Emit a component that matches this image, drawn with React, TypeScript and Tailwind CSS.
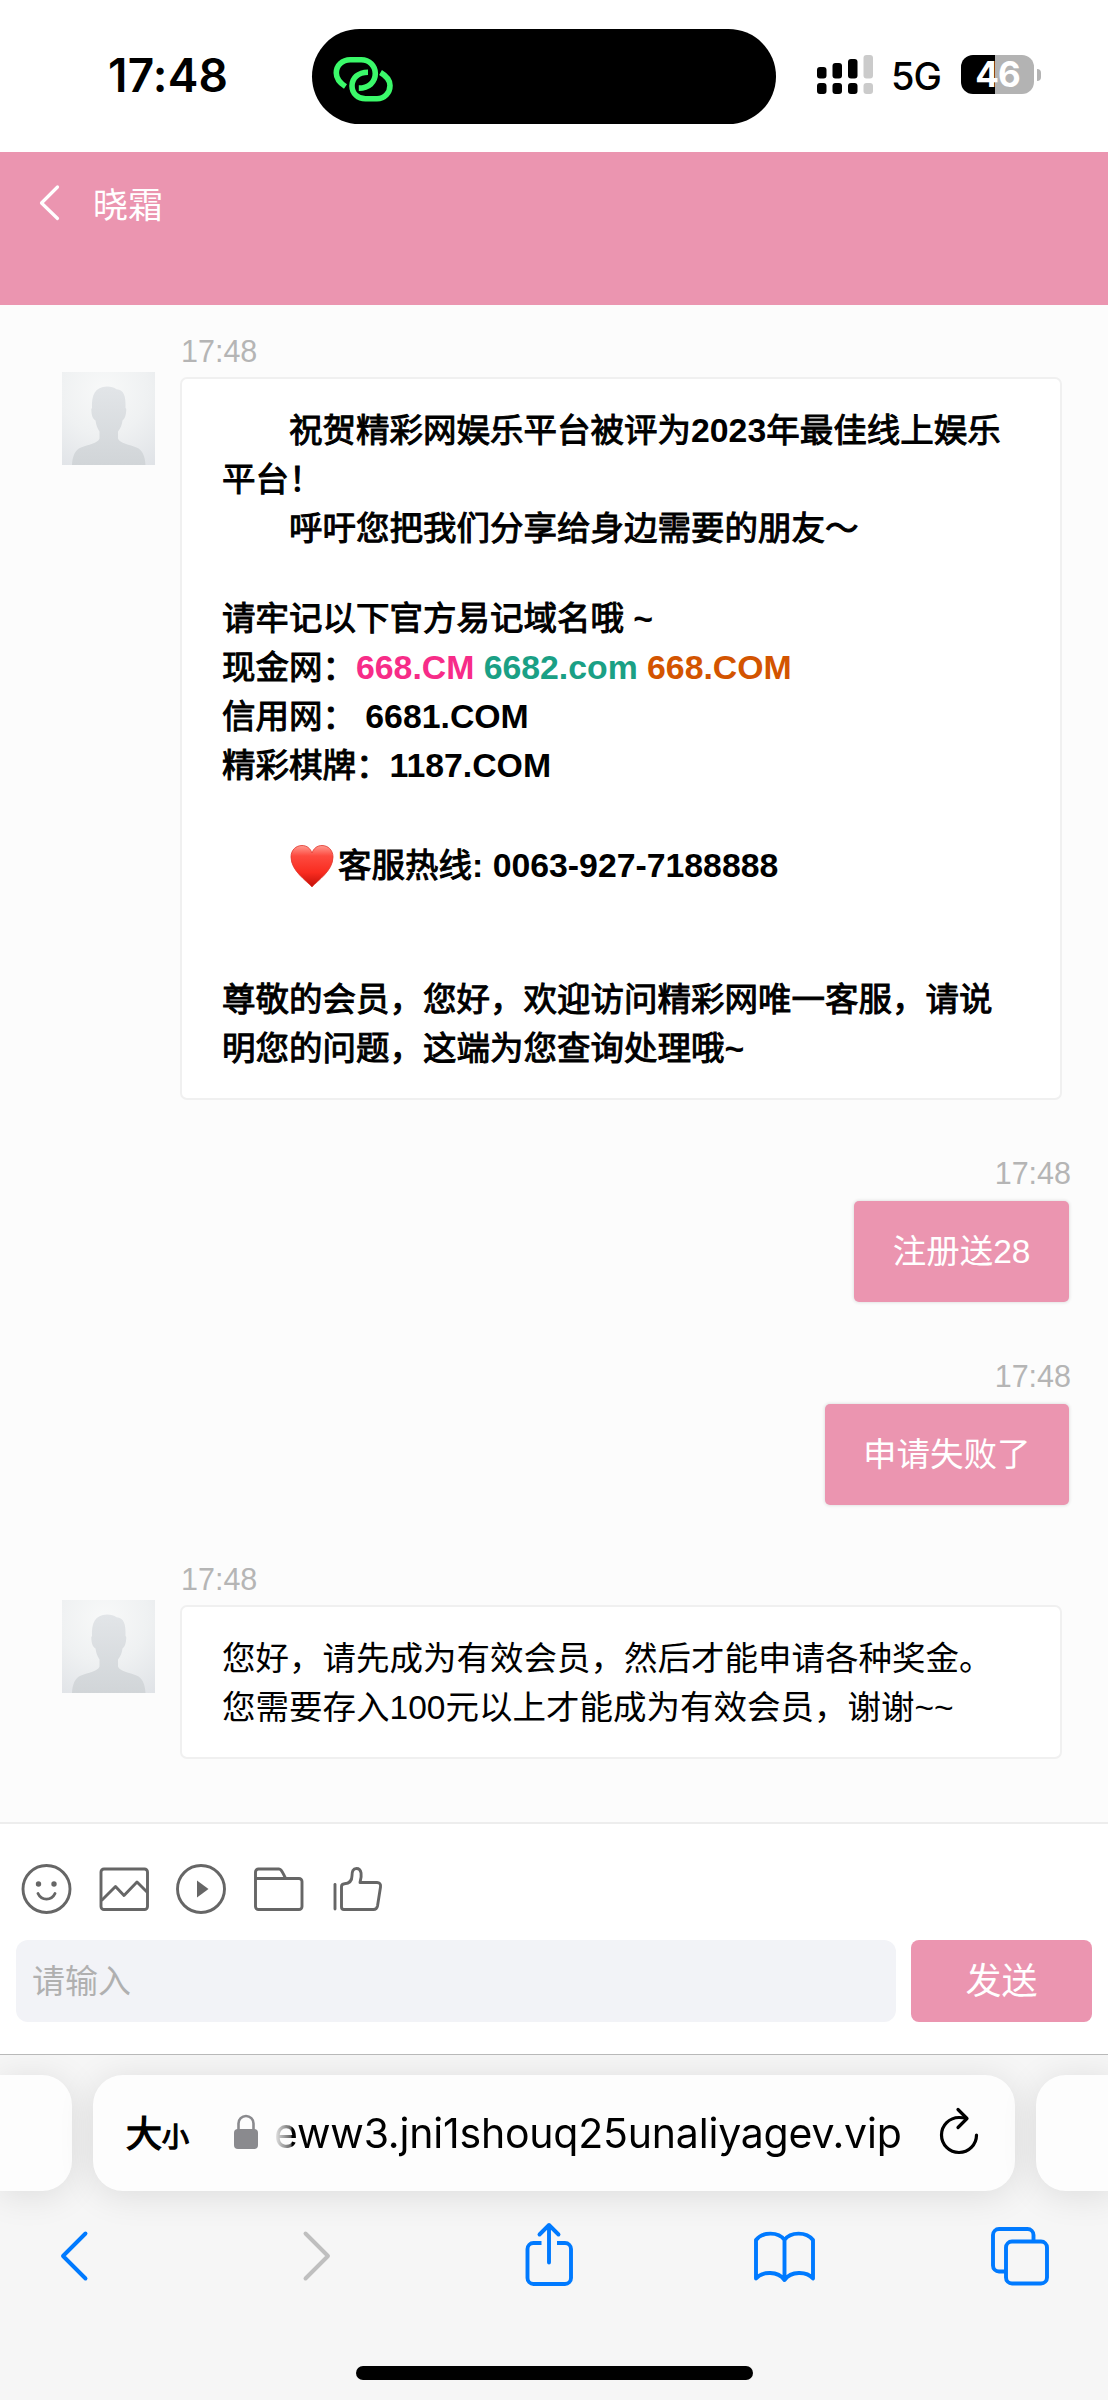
import type { ReactNode } from "react";
import clsx from "clsx";

const CJK = "font-['Liberation_Sans','Noto_Sans_CJK_SC',sans-serif]";

function StatusBar() {
  return (
    <div className="flex h-[152px] items-start bg-white font-['Inter',sans-serif]">
      <div className="mt-[47px] ml-[108px] w-[204px] text-[46px] leading-[56px] font-semibold tracking-[0.2px] text-black">
        17:48
      </div>
      <div className="mt-[29px] h-[95px] w-[464px] rounded-full bg-black pt-[23px] pl-[20px]">
        <svg width="62" height="56" viewBox="0 0 62 56" fill="none" stroke="#3bf96a" strokeWidth="5.6">
          <path d="M13.500 34.500C8 31 4.300 26.500 4.300 21c0-7.500 6-13.200 14-13.200h11c8 0 14 6 14 13.800 0 8.500-6.500 14.500-16.500 14.500" />
          <path d="M36 20.200c-10 0-16 6-16 13.800 0 7.500 6 12.800 13.500 12.800h11.500c7.500 0 13-6 13-13.300 0-5-3.500-9.500-9.500-13" />
        </svg>
      </div>
      <svg className="mt-[52px] ml-[40px]" width="60" height="46" viewBox="0 0 60 46">
        <g fill="#000">
          <rect x="1" y="15" width="9.500" height="11.500" rx="3" />
          <rect x="16.500" y="11" width="9.500" height="15.500" rx="3" />
          <rect x="32" y="7" width="9.500" height="19.500" rx="3" />
          <rect x="1" y="31" width="9.500" height="11" rx="3" />
          <rect x="16.500" y="31" width="9.500" height="11" rx="3" />
          <rect x="32" y="31" width="9.500" height="11" rx="3" />
        </g>
        <g fill="#cbcbcb">
          <rect x="47.500" y="3" width="9.500" height="23.500" rx="3" />
          <rect x="47.500" y="31" width="9.500" height="11" rx="3" />
        </g>
      </svg>
      <div className="mt-[51px] ml-[15px] w-[70px] text-[38px] leading-[50px] font-medium tracking-[-1px] text-black">5G</div>
      <div className="mt-[55px] flex items-center">
        <div className="flex h-[39px] w-[73px] items-center justify-center rounded-[12px] bg-[linear-gradient(90deg,#000_46%,#b3b3b3_46%)] text-[35px] leading-[39px] font-bold tracking-[-1px] text-white">
          46
        </div>
        <div className="ml-[3px] h-[12px] w-[4px] rounded-r-full bg-[#b3b3b3]" />
      </div>
    </div>
  );
}

function ChatHeader() {
  return (
    <header className="flex h-[153px] items-start bg-[#eb95b0]">
      <svg className="mt-[31px] ml-[36px]" width="28" height="40" viewBox="0 0 28 40" fill="none" stroke="#fff" strokeWidth="3.200" strokeLinecap="round" strokeLinejoin="round">
        <path d="M21.500 4 5.500 20 21.500 35.500" />
      </svg>
      <h1 className="mt-[29px] ml-[29px] text-[35px] leading-[50px] text-white">晓霜</h1>
    </header>
  );
}

function Avatar() {
  return (
    <svg className="ml-[62px] h-[93px] w-[93px]" viewBox="0 0 93 93">
      <defs>
        <radialGradient id="avatarBg" cx="0.45" cy="0.2" r="0.95">
          <stop offset="0" stopColor="#f8f9f9" />
          <stop offset="0.5" stopColor="#eff1f2" />
          <stop offset="1" stopColor="#e0e3e7" />
        </radialGradient>
        <linearGradient id="avatarFg" x1="0" y1="0" x2="0" y2="1">
          <stop offset="0" stopColor="#e2e5e8" />
          <stop offset="1" stopColor="#d1d5d8" />
        </linearGradient>
      </defs>
      <rect width="93" height="93" fill="url(#avatarBg)" />
      <path
        fill="url(#avatarFg)"
        d="M10 93c.500-9 3-15 9-17.500 7-3 17-4 18.500-9v-7c-2.500-4-3.500-7-4-11-3-2-4-5-4.200-11 .2-1 .7-1.500.7-1.500C29.500 23 33 15 45 14.500c4 0 7 .8 9.500 2.800 7.500.5 9.500 7 9 18.700 0 0 .8.500.8 1.500-.3 6-1.300 9-3.800 11-.5 4-2 8-4.500 11v7c1.500 5 12 6 18.500 9 6 2.500 8.500 8.500 9 17.500z"
      />
    </svg>
  );
}

function Time() {
  return <div className="text-[30.5px] leading-[34px] text-[#b5b5b5]">17:48</div>;
}

function AgentMessage({ className, children }: { className?: string; children: ReactNode }) {
  return (
    <div className={clsx("flex items-start", className)}>
      <div className="w-[180px] shrink-0 pt-[38px]">
        <Avatar />
      </div>
      <div className="w-[882px]">
        <div className="pl-px">
          <Time />
        </div>
        <div className="mt-[9px] rounded-[7px] border-2 border-[#f0f0f0] bg-white pt-[27px] pb-[25px] pl-[40px] text-[33.5px] leading-[49px] text-black">
          {children}
        </div>
      </div>
    </div>
  );
}

function UserMessage({ className, children }: { className?: string; children: ReactNode }) {
  return (
    <div className={clsx("flex flex-col items-end pr-[37px]", className)}>
      <Time />
      <div className="mt-[11px] mr-[2px] h-[101px] rounded-[5px] bg-[#eb95b0] px-[38.5px] text-[33.5px] leading-[102px] whitespace-nowrap text-white shadow-[0_0_3px_1px_#e4e4e4]">
        {children}
      </div>
    </div>
  );
}

function Heart() {
  return (
    <svg className="mr-[3px] inline-block align-[-11px]" width="46" height="44" viewBox="0 0 46 44">
      <defs>
        <linearGradient id="heart" x1="0" y1="0" x2="0" y2="1">
          <stop offset="0" stopColor="#ff9a90" />
          <stop offset="0.25" stopColor="#fd4a3f" />
          <stop offset="0.65" stopColor="#f92c20" />
          <stop offset="1" stopColor="#c20f08" />
        </linearGradient>
      </defs>
      <path
        d="M23 43C18 37 2 27 2 13 2 6 7 1.500 13 1.500c5 0 8.500 3 10 7.500 1.500-4.500 5-7.500 10-7.500 6 0 11 4.500 11 11.500 0 14-16 24-21 30z"
        fill="url(#heart)"
        stroke="#e0352b"
        strokeWidth="0.800"
      />
    </svg>
  );
}

function Latin({ className, children }: { className?: string; children: ReactNode }) {
  return (
    <span className={clsx("text-[33.8px] leading-none font-bold [-webkit-text-stroke:0px]", className)}>{children}</span>
  );
}

function WelcomeText() {
  return (
    // semibold Chinese: regular glyphs thickened with a thin stroke
    <div className="[-webkit-text-stroke:1px]">
      <p>
        <span className="inline-block w-[67px]" />
        祝贺精彩网娱乐平台被评为<Latin>2023</Latin>年最佳线上娱乐
        <br />
        平台！
      </p>
      <p className="pl-[67px]">呼吁您把我们分享给身边需要的朋友～</p>
      <p className="mt-[41px]">
        请牢记以下官方易记域名哦 <Latin>~</Latin>
      </p>
      <p>
        现金网：<Latin className="text-[#f72c88]">668.CM</Latin> <Latin className="text-[#1aa085]">6682.com</Latin>{" "}
        <Latin className="text-[#d35400]">668.COM</Latin>
      </p>
      <p>
        信用网： <Latin>6681.COM</Latin>
      </p>
      <p>
        精彩棋牌：<Latin>1187.COM</Latin>
      </p>
      <p className="mt-[51px] h-[49px] pl-[67px]">
        <Heart />
        客服热线<Latin>: 0063-927-7188888</Latin>
      </p>
      <p className="mt-[85px]">
        尊敬的会员，您好，欢迎访问精彩网唯一客服，请说
        <br />
        明您的问题，这端为您查询处理哦<Latin>~</Latin>
      </p>
    </div>
  );
}

function Composer() {
  return (
    <div className="h-[232px] border-t-2 border-[#ededed] bg-white">
      <div className="flex h-[116px] items-center gap-[14.7px] pt-[13px] pl-[15px]">
        <svg {...tool}>
          <circle cx="31.500" cy="32" r="23.500" />
          <circle cx="23.500" cy="27" r="2.700" fill="#666" stroke="none" />
          <circle cx="39" cy="27" r="2.700" fill="#666" stroke="none" />
          <path d="M23 36.500c3.500 7.500 13.500 7.500 17 0" />
        </svg>
        <svg {...tool}>
          <rect x="8" y="12" width="46.500" height="40.500" rx="3" />
          <path d="m8.500 43.500 14-14 8.500 9 13-13.500 10.500 10.500" strokeLinecap="butt" />
        </svg>
        <svg {...tool}>
          <circle cx="31" cy="32" r="23.500" />
          <path d="m27 23.500 11.500 8.500L27 40.500z" fill="#666" stroke="none" />
        </svg>
        <svg {...tool}>
          <path d="M7.500 21.500h43.500a3 3 0 0 1 3 3v25a3 3 0 0 1-3 3h-40.500a3 3 0 0 1-3-3v-34.500a3 3 0 0 1 3-3h20.500c3 0 4.500 6 6.500 9" />
        </svg>
        <svg {...tool}>
          <path d="M9 27.500v24.500" />
          <path d="M15.500 29.500c0-2 1-2.500 3-2.700 5-.3 7.500-2.800 7.500-8 0-4.500 1-7.300 4.500-7.300 5.500 0 5.500 7.500 3.500 14h17c2.500 0 4 1.500 3.500 4.500l-3 19c-.5 2.500-1.500 3.500-4 3.500h-29.500c-1.500 0-2.500-.8-2.500-2.500z" />
        </svg>
      </div>
      <div className="flex px-[16px]">
        <div className="h-[82px] w-[881px] rounded-[12px] bg-[#f2f3f7] pl-[16px] text-[33px] leading-[84px] text-[#b0b0b0]">
          请输入
        </div>
        <button className="ml-[15px] h-[82px] w-[181px] rounded-[8px] bg-[#eb95b0] text-[36px] leading-[84px] text-white">
          发送
        </button>
      </div>
    </div>
  );
}

const tool = {
  width: 63,
  height: 64,
  viewBox: "0 0 63 64",
  fill: "none",
  stroke: "#666",
  strokeWidth: 2.9,
  strokeLinecap: "round",
  strokeLinejoin: "round",
} as const;

const nav = {
  height: 68,
  fill: "none",
  stroke: "#007aff",
  strokeWidth: 3.9,
  strokeLinecap: "round",
  strokeLinejoin: "round",
} as const;

const CARD = "h-[116px] shrink-0 bg-[#fdfdfd] shadow-[0_4px_36px_rgba(0,0,0,0.11)]";

function BrowserBar() {
  return (
    <div className="h-[346px] overflow-hidden border-t border-[#b9b9b9] bg-[#f6f6f6]">
      <div className="flex gap-[21px] pt-[20px]">
        <div className={clsx(CARD, "w-[72px] rounded-r-[30px]")} />
        <div className={clsx(CARD, "flex w-[922px] items-center rounded-[30px] pl-[33px] text-black")}>
          <span className="mt-[4px] w-[36px] text-[36px] leading-none [-webkit-text-stroke:1.4px]">大</span>
          <span className="mt-[11px] w-[68px] text-[27px] leading-none [-webkit-text-stroke:1.4px]">小</span>
          <svg className="mb-[3px] ml-[4px]" width="24" height="35" viewBox="0 0 24 35">
            <path d="M4.500 17V9.500a7.500 7.500 0 0 1 15 0V17" fill="none" stroke="#8a8a8e" strokeWidth="2.600" />
            <rect y="15" width="24" height="20" rx="4" fill="#8a8a8e" />
          </svg>
          <span className="ml-[16px] w-[629px] bg-[linear-gradient(90deg,rgba(0,0,0,0.05),rgba(0,0,0,0.6)_17px,#000_18px)] bg-clip-text font-['Inter',sans-serif] text-[41px] leading-[52px] tracking-[-0.2px] whitespace-nowrap text-transparent">
            eww3.jni1shouq25unaliyagev.vip
          </span>
          <svg className="-mt-[4px] ml-[34px]" width="44" height="50" viewBox="0 0 44 50" fill="none" stroke="#000" strokeWidth="3.200" strokeLinecap="round" strokeLinejoin="round">
            <path d="M29.500 12.500C27 11.700 24.500 11.500 22 11.500a17.500 17.500 0 1 0 17.500 17.500" />
            <path d="m21 3.500 9 9-9 9" />
          </svg>
        </div>
        <div className={clsx(CARD, "w-[80px] rounded-l-[30px]")} />
      </div>
      <div className="flex pt-[28px]">
        <svg {...nav} width="300" viewBox="0 0 300 68">
          <path d="M85.500 14.500 63 37l22.500 22.500" />
        </svg>
        <svg {...nav} width="220" viewBox="0 0 220 68" stroke="#bfbfbf">
          <path d="M5.500 14.500 28 37 5.500 59.500" />
        </svg>
        <svg {...nav} width="230" viewBox="0 0 230 68">
          <path d="M21.500 24H13.500a6 6 0 0 0-6 6v29a6 6 0 0 0 6 6h31.500a6 6 0 0 0 6-6V30a6 6 0 0 0-6-6h-8" strokeLinecap="butt" />
          <path d="M29 43.500V6M19.500 15.500 29 6l9.500 9.500" />
        </svg>
        <svg {...nav} width="236" viewBox="0 0 236 68">
          <path d="M34.500 21c-6-8.500-22-8.500-28.500 0v38.500c6.500-7.500 22-7.500 28.500 1.500 6.500-9 22-9 28.500-1.500V21c-6.500-8.500-22.500-8.500-28.500 0zM34.500 21v40" />
        </svg>
        <svg {...nav} width="80" viewBox="0 0 80 68">
          <rect x="20" y="22.500" width="41" height="42" rx="6" />
          <path d="M47.500 22.500V16a6 6 0 0 0-6-6H13a6 6 0 0 0-6 6v30.500a6 6 0 0 0 6 6h7" strokeLinecap="butt" />
        </svg>
      </div>
      <div className="mx-auto mt-[79px] h-[14px] w-[397px] rounded-full bg-black" />
    </div>
  );
}

export default function App() {
  return (
    <div lang="zh-CN" className={clsx("flex h-[2400px] w-[1108px] flex-col overflow-hidden bg-white", CJK)}>
      <StatusBar />
      <ChatHeader />
      <main className="h-[1517px] bg-[#fcfcfc]">
        <AgentMessage className="h-[795px] pt-[29px]">
          <WelcomeText />
        </AgentMessage>
        <UserMessage className="h-[203px] pt-[56px]">注册送28</UserMessage>
        <UserMessage className="h-[203px] pt-[56px]">申请失败了</UserMessage>
        <AgentMessage className="pt-[56px]">
          您好，请先成为有效会员，然后才能申请各种奖金。
          <br />
          您需要存入100元以上才能成为有效会员，谢谢~~
        </AgentMessage>
      </main>
      <Composer />
      <BrowserBar />
    </div>
  );
}
